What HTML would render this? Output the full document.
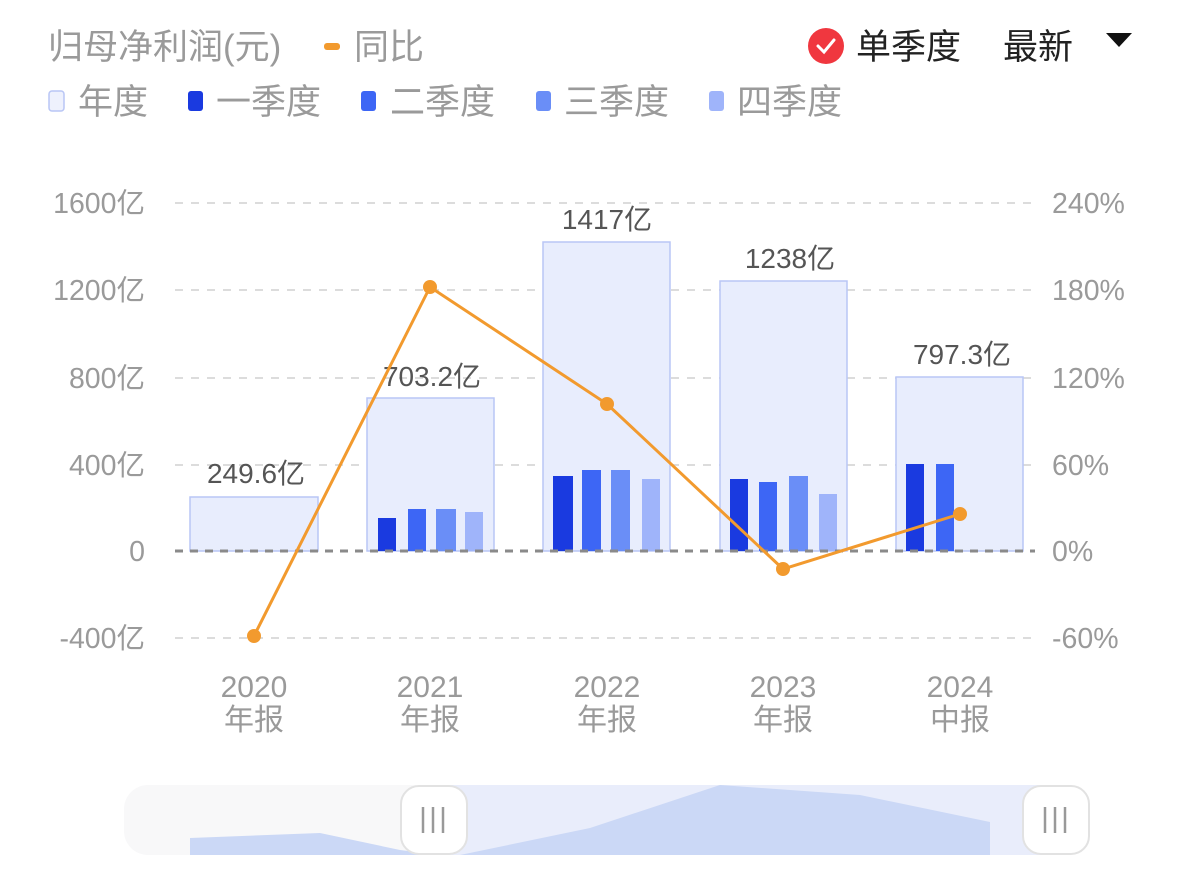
<!DOCTYPE html>
<html><head><meta charset="utf-8"><style>
html,body{margin:0;padding:0;background:#fff;width:1179px;height:895px;overflow:hidden}
svg{display:block}
text{font-family:"Liberation Sans","Noto Sans CJK SC",sans-serif}
</style></head><body>
<svg width="1179" height="895" viewBox="0 0 1179 895" xmlns="http://www.w3.org/2000/svg">
<text x="48" y="59" font-size="35" fill="#9a9a9a">归母净利润(元)</text>
<rect x="324" y="43" width="16" height="7" rx="3" fill="#f29a2e"/>
<text x="354" y="59" font-size="35" fill="#9a9a9a">同比</text>
<circle cx="826" cy="46" r="18" fill="#f0373f"/>
<path d="M818 46 l6 6 l10 -12" stroke="#fff" stroke-width="3" fill="none" stroke-linecap="round"/>
<text x="856" y="59" font-size="35" fill="#222">单季度</text>
<text x="1003" y="59" font-size="35" fill="#222">最新</text>
<path d="M1106 33 h26 l-13 14 z" fill="#111"/>
<rect x="49" y="91" width="15" height="20" rx="3" fill="#eef1fd" stroke="#b9c6f5" stroke-width="1.5"/>
<text x="78" y="114" font-size="35" fill="#9a9a9a">年度</text>
<rect x="188" y="91" width="15" height="20" rx="3" fill="#1a3ae0"/>
<text x="216" y="114" font-size="35" fill="#9a9a9a">一季度</text>
<rect x="361" y="91" width="15" height="20" rx="3" fill="#3d66f5"/>
<text x="390" y="114" font-size="35" fill="#9a9a9a">二季度</text>
<rect x="536" y="91" width="15" height="20" rx="3" fill="#6a8ef7"/>
<text x="564" y="114" font-size="35" fill="#9a9a9a">三季度</text>
<rect x="709" y="91" width="15" height="20" rx="3" fill="#9fb4fa"/>
<text x="737" y="114" font-size="35" fill="#9a9a9a">四季度</text>
<g stroke="#dcdcdc" stroke-width="2" stroke-dasharray="8 8">
<line x1="175" y1="203" x2="1035" y2="203"/>
<line x1="175" y1="290" x2="1035" y2="290"/>
<line x1="175" y1="378" x2="1035" y2="378"/>
<line x1="175" y1="465" x2="1035" y2="465"/>
<line x1="175" y1="638" x2="1035" y2="638"/>
</g>
<g font-size="28.5" fill="#9a9a9a" text-anchor="end">
<text x="145" y="213">1600亿</text>
<text x="145" y="300">1200亿</text>
<text x="145" y="388">800亿</text>
<text x="145" y="475">400亿</text>
<text x="145" y="561">0</text>
<text x="145" y="648">-400亿</text>
</g>
<g font-size="28.5" fill="#9a9a9a">
<text x="1052" y="213">240%</text>
<text x="1052" y="300">180%</text>
<text x="1052" y="388">120%</text>
<text x="1052" y="475">60%</text>
<text x="1052" y="561">0%</text>
<text x="1052" y="648">-60%</text>
</g>
<g fill="#e8edfd" stroke="#b9c6f5" stroke-width="1.5">
<rect x="190" y="497" width="128" height="54"/>
<rect x="367" y="398" width="127" height="153"/>
<rect x="543" y="242" width="127" height="309"/>
<rect x="720" y="281" width="127" height="270"/>
<rect x="896" y="377" width="127" height="174"/>
</g>
<g font-size="28" fill="#555" text-anchor="middle">
<text x="256" y="483">249.6亿</text>
<text x="432" y="386">703.2亿</text>
<text x="607" y="229">1417亿</text>
<text x="790" y="268">1238亿</text>
<text x="962" y="364">797.3亿</text>
</g>
<g>
<rect x="378" y="518" width="18" height="33" fill="#1a3ae0"/>
<rect x="408" y="509" width="18" height="42" fill="#3d66f5"/>
<rect x="436" y="509" width="20" height="42" fill="#6a8ef7"/>
<rect x="465" y="512" width="18" height="39" fill="#9fb4fa"/>
<rect x="553" y="476" width="20" height="75" fill="#1a3ae0"/>
<rect x="582" y="470" width="19" height="81" fill="#3d66f5"/>
<rect x="611" y="470" width="19" height="81" fill="#6a8ef7"/>
<rect x="642" y="479" width="18" height="72" fill="#9fb4fa"/>
<rect x="730" y="479" width="18" height="72" fill="#1a3ae0"/>
<rect x="759" y="482" width="18" height="69" fill="#3d66f5"/>
<rect x="789" y="476" width="19" height="75" fill="#6a8ef7"/>
<rect x="819" y="494" width="18" height="57" fill="#9fb4fa"/>
<rect x="906" y="464" width="18" height="87" fill="#1a3ae0"/>
<rect x="936" y="464" width="18" height="87" fill="#3d66f5"/>
</g>
<line x1="175" y1="551" x2="1035" y2="551" stroke="#8a8a8a" stroke-width="3" stroke-dasharray="8 7"/>
<polyline points="254,636 430,287 607,404 783,569 960,514" fill="none" stroke="#f29a2e" stroke-width="3"/>
<g fill="#f29a2e">
<circle cx="254" cy="636" r="7"/><circle cx="430" cy="287" r="7"/><circle cx="607" cy="404" r="7"/><circle cx="783" cy="569" r="7"/><circle cx="960" cy="514" r="7"/>
</g>
<g font-size="30" fill="#9a9a9a" text-anchor="middle">
<text x="254" y="697">2020</text><text x="254" y="730">年报</text>
<text x="430" y="697">2021</text><text x="430" y="730">年报</text>
<text x="607" y="697">2022</text><text x="607" y="730">年报</text>
<text x="783" y="697">2023</text><text x="783" y="730">年报</text>
<text x="960" y="697">2024</text><text x="960" y="730">中报</text>
</g>
<rect x="124" y="785" width="966" height="70" rx="24" fill="#f8f8f9"/>
<rect x="434" y="785" width="622" height="70" fill="#e9edfb"/>
<polygon points="190,838 320,833 400,850 440,855 460,855 590,828 720,785 860,795 990,822 990,855 190,855" fill="#cbd8f6"/>
<rect x="401" y="786" width="66" height="68" rx="18" fill="#fff" stroke="#e2e2e2" stroke-width="2"/>
<g stroke="#999" stroke-width="2.5"><line x1="423" y1="807" x2="423" y2="833"/><line x1="433" y1="807" x2="433" y2="833"/><line x1="443" y1="807" x2="443" y2="833"/></g>
<rect x="1023" y="786" width="66" height="68" rx="18" fill="#fff" stroke="#e2e2e2" stroke-width="2"/>
<g stroke="#999" stroke-width="2.5"><line x1="1045" y1="807" x2="1045" y2="833"/><line x1="1055" y1="807" x2="1055" y2="833"/><line x1="1065" y1="807" x2="1065" y2="833"/></g>
</svg>
</body></html>
